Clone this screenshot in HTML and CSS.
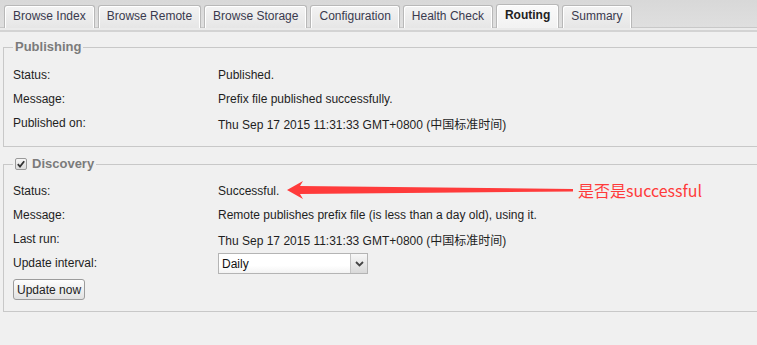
FILE: index.html
```html
<!DOCTYPE html>
<html lang="en">

<head>
  <meta charset="UTF-8">
  <title>Routing</title>
  <link rel="stylesheet" href="styles.css">
</head>

<body>

  <div class="tabbar">
    <ul class="tabs">
      <li class="tab">Browse Index</li>
      <li class="tab">Browse Remote</li>
      <li class="tab">Browse Storage</li>
      <li class="tab">Configuration</li>
      <li class="tab">Health Check</li>
      <li class="tab active">Routing</li>
      <li class="tab">Summary</li>
    </ul>
  </div>
  <div class="strip"></div>

  <main class="page">
    <fieldset class="group publishing">
      <legend>Publishing</legend>
      <div class="rows">
        <span class="label">Status:</span><span class="value">Published.</span>
        <span class="label">Message:</span><span class="value">Prefix file published successfully.</span>
        <span class="label">Published on:</span><span class="value">Thu Sep 17 2015 11:31:33 GMT+0800 (中国标准时间)</span>
      </div>
    </fieldset>

    <fieldset class="group discovery">
      <legend>
        <span class="check">
          <svg width="8" height="8" viewBox="0 0 8 8"><path d="M0.8 4.2 L3 6.6 L7.2 1.2" fill="none" stroke="#333" stroke-width="1.8"/></svg>
        </span>
        Discovery
      </legend>
      <div class="rows">
        <span class="label">Status:</span><span class="value">Successful.</span>
        <span class="label">Message:</span><span class="value">Remote publishes prefix file (is less than a day old), using it.</span>
        <span class="label">Last run:</span><span class="value">Thu Sep 17 2015 11:31:33 GMT+0800 (中国标准时间)</span>
        <span class="label">Update interval:</span>
        <span class="value">
          <span class="select">
            <select>
              <option>Daily</option>
              <option>Hourly</option>
              <option>Weekly</option>
            </select>
            <span class="drop">
              <svg width="9" height="6" viewBox="0 0 9 6"><path d="M1 1 L4.5 4.5 L8 1" fill="none" stroke="#444" stroke-width="1.8"/></svg>
            </span>
          </span>
        </span>
      </div>
      <button class="update">Update now</button>
    </fieldset>

    <div class="note">
      <svg width="294" height="26" viewBox="0 0 294 26">
        <polygon points="7,13 23,4 20,9 293,12 293,14.5 20,17 23,22" fill="#ff3b3b"/>
      </svg>
      <span class="note-text">是否是successful</span>
    </div>
  </main>

</body>

</html>
```

FILE: styles.css
```css
* {
  box-sizing: border-box;
}

body {
  margin: 0;
  background: #f0f0f0;
  font-family: "Liberation Sans", Arial, "Noto Sans CJK SC", sans-serif;
  font-size: 12px;
  color: #1e1e1e;
  overflow: hidden;
}

.tabbar {
  height: 28px;
  background: linear-gradient(#d8d8d8, #dfdfdf);
  border-bottom: 1px solid #c8c8c8;
  padding: 5px 0 0 4px;
}

.tabs {
  list-style: none;
  margin: 0;
  padding: 0;
  display: flex;
  gap: 3px;
  height: 22px;
}

.tab {
  height: 23px;
  padding: 0 8px;
  line-height: 21px;
  color: #3a3a4e;
  background: linear-gradient(#f3f3f3, #e6e6e6);
  border: 1px solid #b8b8b8;
  border-bottom: none;
  border-radius: 3px 3px 0 0;
  box-shadow: inset 1px 1px 0 #fff, inset -1px 0 0 #fff;
}

.tab.active {
  margin-top: -1px;
  height: 24px;
  font-weight: bold;
  color: #222;
  background: linear-gradient(#fafafa, #f2f2f2);
}

.strip {
  height: 4px;
  background: #ebebeb;
  border-bottom: 2px solid #d3d3d3;
}

.page {
  position: relative;
  padding: 7px 0 0 3px;
}

.group {
  width: 800px;
  margin: 0;
  border: 1px solid #c8c8c8;
  padding: 8px 0 11px 9px;
}

.group legend {
  margin-left: 0;
  padding: 0 2px;
  height: 16px;
  line-height: 16px;
  font-size: 13px;
  font-weight: bold;
  color: #7b7b7b;
  display: flex;
  align-items: center;
  gap: 5px;
}

.discovery {
  margin-top: 9px;
  padding: 7px 0 11px 9px;
}

.check {
  width: 12px;
  height: 12px;
  border: 1px solid #9a9a9a;
  border-radius: 2px;
  background: linear-gradient(#f6f6f6, #dcdcdc);
  display: flex;
  align-items: center;
  justify-content: center;
}

.rows {
  display: grid;
  grid-template-columns: 205px auto;
  grid-auto-rows: 24px;
  align-items: center;
}

.select {
  display: flex;
  width: 150px;
  height: 21px;
  margin-top: 1px;
  border: 1px solid #b4b4b4;
  background: linear-gradient(#ffffff 60%, #f3f3f3);
}

.select select {
  flex: 1;
  appearance: none;
  -webkit-appearance: none;
  border: none;
  background: transparent;
  font-family: inherit;
  font-size: 12px;
  color: #111;
  padding: 0 3px;
  outline: none;
}

.drop {
  width: 17px;
  border-left: 1px solid #c4c4c4;
  background: linear-gradient(#f7f7f7, #d9d9d9);
  display: flex;
  align-items: center;
  justify-content: center;
}

.update {
  margin-top: 4px;
  height: 21px;
  padding: 0 3px;
  font-family: inherit;
  font-size: 12px;
  color: #222;
  border: 1px solid #9c9c9c;
  border-radius: 3px;
  background: linear-gradient(#fdfdfd, #e2e2e2);
}

.note {
  position: absolute;
  left: 280px;
  top: 145px;
  display: flex;
  align-items: center;
}

.note-text {
  margin-left: 4px;
  font-family: "Noto Sans CJK SC", sans-serif;
  font-size: 16px;
  color: #ff3b3b;
  line-height: 22px;
}
```
